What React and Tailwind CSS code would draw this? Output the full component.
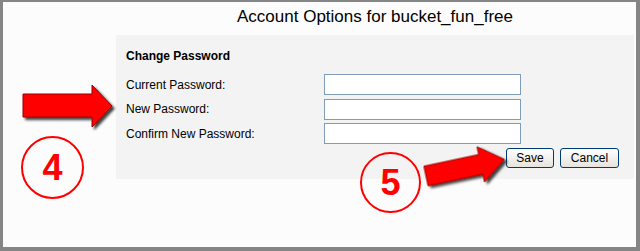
import React from "react";

const rows = ["Current Password:", "New Password:", "Confirm New Password:"];

function Arrows() {
  return (
    <svg
      className="absolute left-[-3px] top-[-2px] pointer-events-none"
      width="640"
      height="251"
      viewBox="0 0 640 251"
    >
      <defs>
        <filter id="shade" x="-20%" y="-30%" width="150%" height="170%">
          <feDropShadow dx="2.5" dy="2.5" stdDeviation="1.2" floodColor="#222" floodOpacity="0.85" />
        </filter>
      </defs>
      <polygon
        points="23,94 92,94 92,85 112,106 92,127 92,117 23,117"
        fill="#ff0000"
        stroke="#9a0000"
        strokeWidth="1"
        filter="url(#shade)"
      />
      <g transform="translate(426 176) rotate(-12)">
        <polygon
          points="0,-10 56,-10 56,-18 80,0 56,18 56,10 0,10"
          fill="#ff0000"
          stroke="#9a0000"
          strokeWidth="1"
          filter="url(#shade)"
        />
      </g>
    </svg>
  );
}

function Step({ n, className }) {
  return (
    <div
      className={`absolute flex items-center justify-center rounded-full border-[2.5px] border-[#ff0000] text-[#ff0000] font-bold text-[36px] leading-none font-['Liberation_Sans',Arial,sans-serif] ${className}`}
    >
      {n}
    </div>
  );
}

export default function App() {
  return (
    <div className="relative w-[640px] h-[251px] overflow-hidden bg-[#fcfcfc] border-l-[3px] border-t-2 border-r-4 border-b-4 border-[#858585] font-['Liberation_Sans',Arial,sans-serif] text-black">
      <div className="ml-[113px] w-[518px]">
        <h1 className="pt-[5px] mb-[8px] text-center text-[17px] leading-[20px]">
          Account Options for bucket_fun_free
        </h1>

        <div className="bg-[#f3f3f3] pl-[10px] pr-[15px] pt-[14px] pb-[11px]">
          <div className="text-[12px] leading-[14px] font-bold">Change Password</div>

          <div className="mt-[11px] flex flex-col gap-[3.5px]">
            {rows.map((label) => (
              <div key={label} className="flex items-center">
                <span className="w-[198px] text-[12px] leading-[14px]">{label}</span>
                <input
                  type="password"
                  className="w-[197px] h-[21px] bg-white border border-[#7f9db9] outline-none"
                />
              </div>
            ))}
          </div>

          <div className="mt-[4px] flex justify-end gap-[6px]">
            <button className="w-[48px] h-[20px] rounded-[3px] border border-[#003c74] bg-gradient-to-b from-white to-[#e6e4dc] text-[12px] leading-none">
              Save
            </button>
            <button className="w-[59px] h-[20px] rounded-[3px] border border-[#003c74] bg-gradient-to-b from-white to-[#e6e4dc] text-[12px] leading-none">
              Cancel
            </button>
          </div>
        </div>
      </div>

      <Arrows />
      <Step n="4" className="left-[18px] top-[134px] w-[63px] h-[63px]" />
      <Step n="5" className="left-[357px] top-[150px] w-[61px] h-[61px]" />
    </div>
  );
}
